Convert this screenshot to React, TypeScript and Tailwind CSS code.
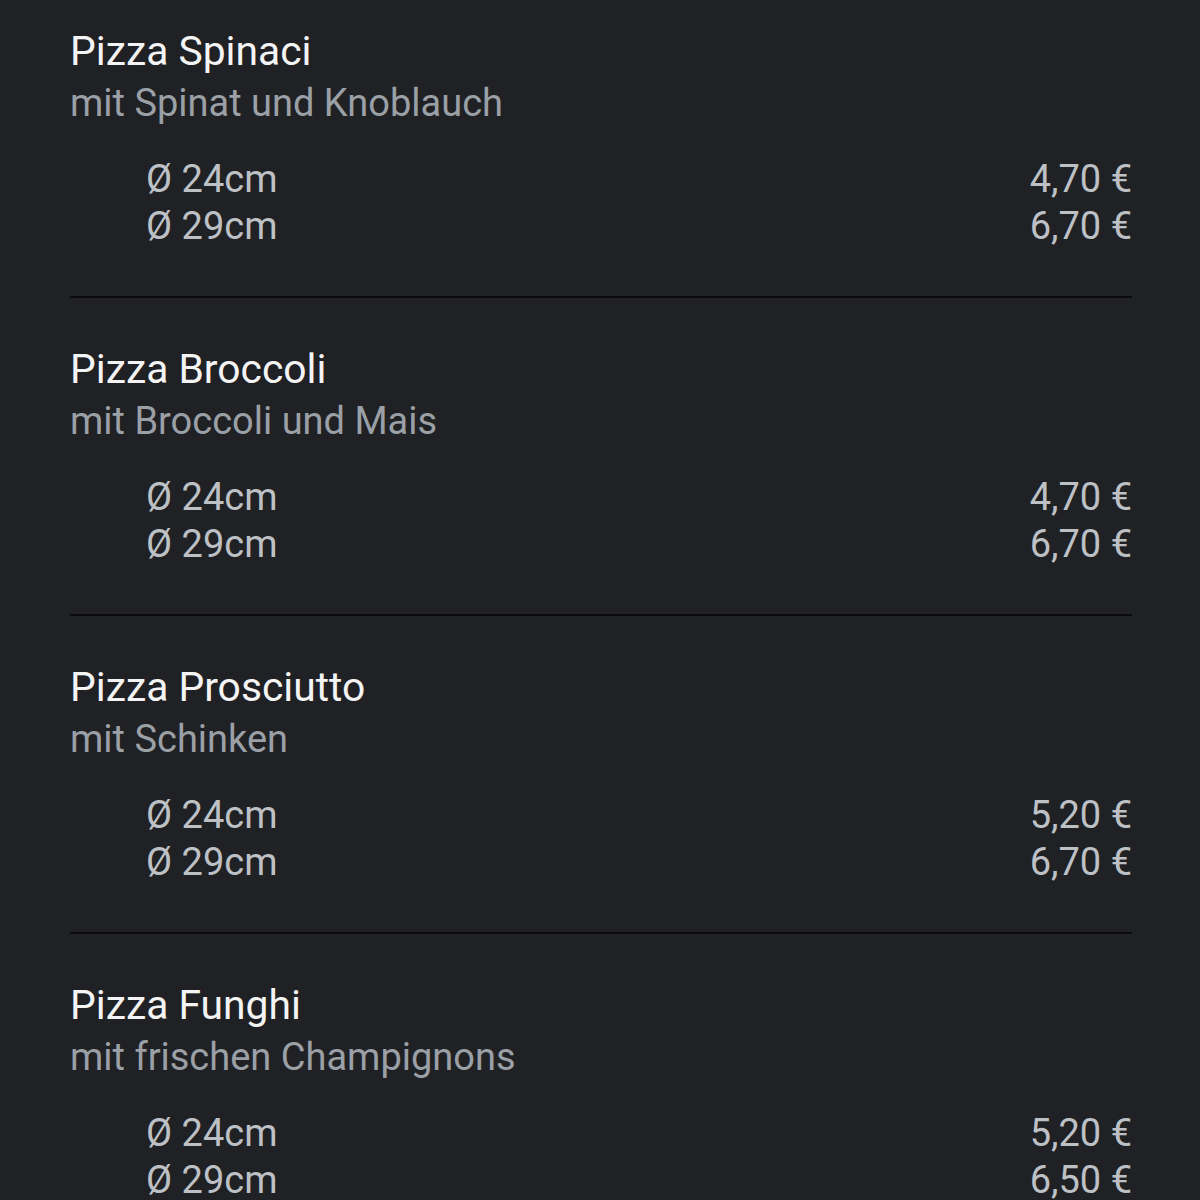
const pizzas = [
  {
    name: "Pizza Spinaci",
    desc: "mit Spinat und Knoblauch",
    prices: ["4,70 €", "6,70 €"],
  },
  {
    name: "Pizza Broccoli",
    desc: "mit Broccoli und Mais",
    prices: ["4,70 €", "6,70 €"],
  },
  {
    name: "Pizza Prosciutto",
    desc: "mit Schinken",
    prices: ["5,20 €", "6,70 €"],
  },
  {
    name: "Pizza Funghi",
    desc: "mit frischen Champignons",
    prices: ["5,20 €", "6,50 €"],
  },
];

const sizes = ["Ø 24cm", "Ø 29cm"];

export default function App() {
  return (
    <div
      className="min-h-screen bg-[#202124] pl-[70px] pr-[68px] pt-[25px]"
      style={{ fontFamily: "Roboto, 'Noto Sans', sans-serif" }}
    >
      {pizzas.map((p, i) => (
        <div key={p.name} className={i > 0 ? "pt-[45px]" : ""}>
          <h2 className="text-[40.8px] leading-[52px] text-[#f4f4f5]">
            {p.name}
          </h2>
          <p className="mt-[3px] text-[38px] leading-[47px] text-[#9aa0a6]">
            {p.desc}
          </p>

          {/* sizes and prices */}
          <div className="mt-[29px] pl-[76px] text-[38px] leading-[47px] text-[#bdc1c6]">
            {sizes.map((s, j) => (
              <div key={s} className="flex justify-between">
                <span>{s}</span>
                <span>{p.prices[j]}</span>
              </div>
            ))}
          </div>

          <div className="mt-[46px] h-[2px] bg-[#0c0c0e]" />
        </div>
      ))}
    </div>
  );
}
